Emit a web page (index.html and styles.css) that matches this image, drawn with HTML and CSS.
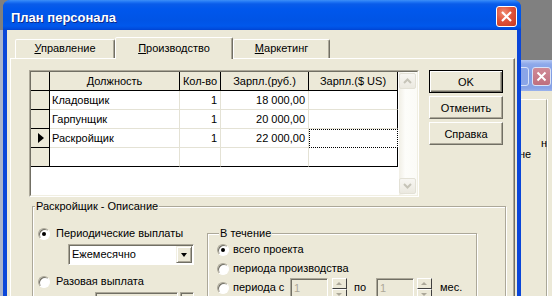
FILE: index.html
```html
<!DOCTYPE html>
<html lang="ru">
<head>
  <meta charset="UTF-8" />
  <meta name="viewport" content="width=device-width, initial-scale=1.0"/>
  <title>План персонала</title>
  <link rel="stylesheet" href="styles.css">
</head>
<body>
  <div class="desktop">
    <div class="edge-left"></div>

    <div class="back-window">
      <div class="back-title">
        <span class="back-btn back-max"></span>
        <span class="back-btn back-close">
          <svg width="11" height="11" viewBox="0 0 11 11"><path d="M1.5 1.5 L9.5 9.5 M9.5 1.5 L1.5 9.5" stroke="#fff" stroke-width="2"/></svg>
        </span>
      </div>
      <div class="back-frame">
        <div class="back-line l1">н</div>
        <div class="back-line l2">не</div>
      </div>
    </div>

    <div class="dialog">
      <div class="titlebar">
        <span class="title">План персонала</span>
        <span class="close">
          <svg width="13" height="13" viewBox="0 0 13 13"><path d="M2 2 L11 11 M11 2 L2 11" stroke="#fff" stroke-width="2.2"/></svg>
        </span>
      </div>

      <div class="client">
        <div class="tabs">
          <div class="tab"><u>У</u>правление</div>
          <div class="tab active"><u>П</u>роизводство</div>
          <div class="tab"><u>М</u>аркетинг</div>
        </div>

        <div class="panel">
          <div class="top-row">
            <div class="grid-box">
              <div class="grid-inner">
                <table class="grid">
                  <colgroup>
                    <col class="c-ind"><col class="c-name"><col class="c-qty"><col class="c-rub"><col class="c-usd">
                  </colgroup>
                  <tr>
                    <th class="ind"></th>
                    <th>Должность</th>
                    <th>Кол-во</th>
                    <th>Зарпл.(руб.)</th>
                    <th>Зарпл.($ US)</th>
                  </tr>
                  <tr>
                    <td class="ind"></td>
                    <td>Кладовщик</td>
                    <td class="num">1</td>
                    <td class="num">18 000,00</td>
                    <td></td>
                  </tr>
                  <tr>
                    <td class="ind"></td>
                    <td>Гарпунщик</td>
                    <td class="num">1</td>
                    <td class="num">20 000,00</td>
                    <td></td>
                  </tr>
                  <tr>
                    <td class="ind"><span class="arrow"></span></td>
                    <td>Раскройщик</td>
                    <td class="num">1</td>
                    <td class="num">22 000,00</td>
                    <td class="focus"></td>
                  </tr>
                  <tr class="last">
                    <td class="ind"></td>
                    <td></td>
                    <td></td>
                    <td></td>
                    <td></td>
                  </tr>
                </table>
                <div class="vscroll">
                  <div class="sb-btn">
                    <svg width="9" height="6" viewBox="0 0 9 6"><path d="M1 5 L4.5 1.5 L8 5" fill="none" stroke="#c6c4b8" stroke-width="2"/></svg>
                  </div>
                  <div class="sb-track"></div>
                  <div class="sb-btn">
                    <svg width="9" height="6" viewBox="0 0 9 6"><path d="M1 1 L4.5 4.5 L8 1" fill="none" stroke="#c6c4b8" stroke-width="2"/></svg>
                  </div>
                </div>
              </div>
            </div>

            <div class="buttons">
              <button class="btn default">OK</button>
              <button class="btn">Отменить</button>
              <button class="btn">Справка</button>
            </div>
          </div>

          <fieldset class="group desc">
            <legend>Раскройщик - Описание</legend>
            <div class="pay-col">
              <div class="option"><span class="radio on"></span>Периодические выплаты</div>
              <div class="combo">
                <span class="combo-text">Ежемесячно</span>
                <span class="drop"><span class="tri"></span></span>
              </div>
              <div class="option option-2"><span class="radio"></span>Разовая выплата</div>
              <div class="date-row">
                <span class="date-box"></span>
                <span class="date-btn"></span>
              </div>
            </div>

            <fieldset class="group period">
              <legend>В течение</legend>
              <div class="option row"><span class="radio on"></span>всего проекта</div>
              <div class="option row"><span class="radio"></span>периода производства</div>
              <div class="option row range">
                <span class="radio"></span>
                <span class="range-label">периода с</span>
                <span class="spin-edit">1</span>
                <span class="spin"><span class="spin-up"></span><span class="spin-down"></span></span>
                <span class="range-to">по</span>
                <span class="spin-edit">1</span>
                <span class="spin second"><span class="spin-up"></span><span class="spin-down"></span></span>
                <span class="range-unit">мес.</span>
              </div>
            </fieldset>
          </fieldset>
        </div>
      </div>
    </div>
  </div>
</body>
</html>
```

FILE: styles.css
```css
* { box-sizing: border-box; }
body {
  margin: 0;
  font-family: "Liberation Sans", Arial, sans-serif;
  font-size: 11px;
  color: #000;
}
.desktop {
  position: relative;
  width: 552px;
  height: 296px;
  overflow: hidden;
  background: #808080;
}
.edge-left {
  position: absolute;
  left: 0;
  top: 30px;
  width: 3px;
  height: 266px;
  background: #a9b3ca;
}

/* window behind the dialog */
.back-window {
  position: absolute;
  left: 470px;
  top: 60px;
  width: 100px;
  height: 260px;
  background: #ece9d8;
  border-radius: 7px 7px 0 0;
}
.back-title {
  height: 31px;
  border-radius: 7px 7px 0 0;
  background: linear-gradient(#b4c8f3, #8ea9ea 4px, #7f9ce2 16px, #87a2e6 28px, #9ab2ec);
  display: flex;
  justify-content: flex-end;
  gap: 3px;
  padding: 7px 19px 0 0;
}
.back-btn {
  width: 19px;
  height: 19px;
  border: 1px solid #d9e2f7;
  border-radius: 3px;
  display: flex;
  align-items: center;
  justify-content: center;
}
.back-max { background: #8aa5e8; }
.back-close { background: linear-gradient(#d08a96, #bf6f7e); }
.back-frame {
  margin-top: 8px;
  width: 77px;
  height: 220px;
  border-top: 1px solid #fff;
  border-right: 1px solid #a9a798;
  box-shadow: 1px 0 0 #fff;
  padding-top: 38px;
}
.back-line { line-height: 11px; }
.back-line.l1 { margin-left: 71px; }
.back-line.l2 { margin-left: 49px; }

/* dialog */
.dialog {
  position: absolute;
  left: 3px;
  top: 0;
  width: 518px;
  height: 330px;
  background: #0a46d9;
  border-radius: 8px 8px 0 0;
  padding: 0 4px;
  display: flex;
  flex-direction: column;
}
.titlebar {
  height: 30px;
  margin: 0 -4px;
  border-radius: 7px 7px 0 0;
  background: linear-gradient(#3d8ff7 0, #1e74f4 2px, #0a5ce9 4px, #0057ec 9px, #0054e6 20px, #0058ec 26px, #004bdc 29px, #0042d2 30px);
  display: flex;
  justify-content: space-between;
  align-items: flex-start;
  padding: 6px 4px 0 8px;
}
.title {
  margin-top: 4px;
  line-height: 15px;
  color: #fff;
  font-weight: bold;
  font-size: 13px;
  text-shadow: 1px 1px 0 #0c2a8a;
}
.close {
  width: 21px;
  height: 21px;
  border: 1px solid #fff;
  border-radius: 3px;
  background: radial-gradient(circle at 35% 30%, #f08e72, #e0533b 45%, #c8381f);
  display: flex;
  align-items: center;
  justify-content: center;
}
.client {
  flex: 1;
  background: #ece9d8;
  padding: 7px 2px 0 3px;
}

/* tabs */
.tabs {
  display: flex;
  align-items: flex-end;
  height: 21px;
  padding-left: 5px;
}
.tab {
  height: 19px;
  line-height: 17px;
  text-align: center;
  border: 1px solid;
  border-bottom: 0;
  border-color: #fff #716f64 transparent #fff;
  border-radius: 2px 2px 0 0;
  box-shadow: inset -1px 0 0 #aca899;
  background: #ece9d8;
}
.tab:nth-child(1) { width: 100px; }
.tab:nth-child(3) { width: 97px; }
.tab.active {
  width: 118px;
  height: 22px;
  padding-top: 2px;
  margin-bottom: -1px;
  position: relative;
  z-index: 1;
}
.panel {
  height: 260px;
  border: 1px solid;
  border-color: #fff #716f64 #716f64 #fff;
  box-shadow: inset -1px 0 0 #aca899;
  padding: 11px 0 0 18px;
}
.top-row {
  display: flex;
  align-items: flex-start;
  gap: 10px;
}

/* grid */
.grid-box {
  width: 390px;
  height: 127px;
  border: 1px solid;
  border-color: #aca899 #fff #fff #aca899;
}
.grid-inner {
  height: 100%;
  border: 1px solid;
  border-color: #716f64 #f1efe2 #f1efe2 #716f64;
  background: #fff;
  display: flex;
  gap: 1px;
}
.grid {
  border-collapse: separate;
  border-spacing: 0;
  table-layout: fixed;
  width: 367px;
  align-self: flex-start;
}
.c-ind { width: 19px; }
.c-name { width: 130px; }
.c-qty { width: 41px; }
.c-rub { width: 88px; }
.c-usd { width: 89px; }
.grid th,
.grid td {
  box-sizing: content-box;
  height: 18px;
  line-height: 18px;
  padding: 0 2px;
  border-right: 1px solid #e4e2d5;
  border-bottom: 1px solid #e4e2d5;
  white-space: nowrap;
  overflow: hidden;
  font-weight: normal;
}
.grid th {
  background: #ece9d8;
  border-color: #000;
  text-align: center;
}
.grid .ind {
  background: #ece9d8;
  border-color: #000;
  padding: 0;
}
.grid .last td { border-bottom-color: #000; }
.grid th:last-child,
.grid td:last-child { border-right-color: #000; }
.grid .num {
  text-align: right;
  padding-right: 3px;
}
.grid td.focus {
  border-color: #fff;
  outline: 1px dotted #000;
  outline-offset: -1px;
}
.arrow {
  display: block;
  margin: 0 0 0 7px;
  width: 0;
  height: 0;
  border-left: 6px solid #000;
  border-top: 5px solid transparent;
  border-bottom: 5px solid transparent;
}
.vscroll {
  width: 18px;
  display: flex;
  flex-direction: column;
  padding: 1px 1px 1px 0;
  background: linear-gradient(to right, #f1efe6, #fdfdfa 35%, #fbfbf7);
}
.sb-btn {
  height: 16px;
  border: 1px solid #e3e1d6;
  border-radius: 2px;
  background: linear-gradient(#f7f6f2, #ebe9e0);
  display: flex;
  align-items: center;
  justify-content: center;
}
.sb-track { flex: 1; }

/* buttons */
.buttons {
  display: flex;
  flex-direction: column;
  gap: 3px;
}
.btn {
  width: 74px;
  height: 23px;
  padding: 0;
  font: inherit;
  color: #000;
  background: #ece9d8;
  border: 1px solid;
  border-color: #fff #716f64 #716f64 #fff;
  box-shadow: inset -1px -1px 0 #aca899;
}
.btn.default {
  border-color: #000;
  box-shadow: inset 1px 1px 0 #fff, inset -1px -1px 0 #716f64, inset -2px -2px 0 #aca899;
}

/* group boxes */
.group {
  margin: 0;
  padding: 0;
  min-width: 0;
  border: 1px solid #aca899;
  box-shadow: inset 1px 1px 0 #fff, 1px 1px 0 #fff;
}
.group legend {
  padding: 0 1px;
  margin-left: 2px;
  line-height: 13px;
  background: #ece9d8;
}
.desc {
  margin: 3px 0 0 3px;
  width: 474px;
  height: 110px;
  display: flex;
  align-items: flex-start;
}
.pay-col {
  width: 174px;
  flex: none;
  padding: 14px 0 0 5px;
}
.option {
  display: flex;
  align-items: center;
  height: 13px;
  line-height: 13px;
  white-space: nowrap;
}
.radio {
  position: relative;
  flex: none;
  width: 12px;
  height: 12px;
  margin-right: 6px;
  border-radius: 50%;
  border: 1px solid;
  border-color: #aca899 #fff #fff #aca899;
  background: #fff;
  box-shadow: inset 1px 1px 0 #716f64;
}
.radio.on::after {
  content: "";
  position: absolute;
  left: 3px;
  top: 3px;
  width: 4px;
  height: 4px;
  border-radius: 50%;
  background: #000;
}
.combo {
  display: flex;
  margin: 4px 0 0 30px;
  width: 126px;
  height: 21px;
  border: 1px solid;
  border-color: #aca899 #fff #fff #aca899;
  box-shadow: inset 1px 1px 0 #716f64;
  background: #fff;
  padding: 1px 1px 1px 1px;
}
.combo-text {
  flex: 1;
  padding-left: 2px;
  line-height: 17px;
}
.drop {
  width: 16px;
  height: 17px;
  border: 1px solid;
  border-color: #f1efe2 #716f64 #716f64 #f1efe2;
  box-shadow: inset 1px 1px 0 #fff, inset -1px -1px 0 #aca899;
  background: #ece9d8;
  display: flex;
  align-items: center;
  justify-content: center;
}
.tri {
  width: 0;
  height: 0;
  border-top: 4px solid #000;
  border-left: 3.5px solid transparent;
  border-right: 3.5px solid transparent;
}
.option-2 { margin-top: 10px; }
.date-row {
  display: flex;
  gap: 2px;
  margin: 4px 0 0 57px;
}
.date-box,
.date-btn {
  height: 21px;
  border: 1px solid;
  border-color: #aca899 #fff #fff #aca899;
  box-shadow: inset 1px 1px 0 #716f64;
}
.date-box { width: 83px; }
.date-btn { width: 14px; }

.period {
  margin-top: 14px;
  width: 270px;
  height: 80px;
  padding-left: 9px;
}
.option.row { height: 19px; }
.period .radio { margin-right: 4px; }
.range .range-label { width: 57px; }
.spin-edit {
  align-self: flex-start;
  width: 38px;
  height: 22px;
  border: 1px solid;
  border-color: #aca899 #fff #fff #aca899;
  box-shadow: inset 1px 1px 0 #716f64;
  color: #aca899;
  padding: 3px 0 0 3px;
  line-height: 13px;
}
.spin {
  align-self: flex-start;
  display: flex;
  flex-direction: column;
  width: 15px;
  height: 22px;
  margin-left: 4px;
}
.spin.second { margin-left: 3px; }
.spin-up,
.spin-down {
  flex: 1;
  border: 1px solid;
  border-color: #fff #404040 #404040 #fff;
  background: #ece9d8;
  position: relative;
}
.spin-up::after,
.spin-down::after {
  content: "";
  position: absolute;
  left: 3px;
  top: 3px;
  border-left: 3px solid transparent;
  border-right: 3px solid transparent;
}
.spin-up::after { border-bottom: 3px solid #aca899; }
.spin-down::after { border-top: 3px solid #aca899; }
.range-to {
  width: 22px;
  margin-left: 7px;
}
.range-unit { margin-left: 8px; }
```
